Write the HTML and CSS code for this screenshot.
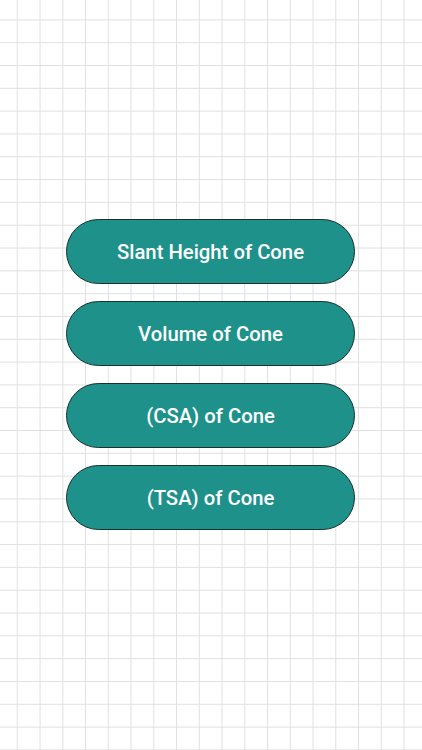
FILE: index.html
```html
<!DOCTYPE html>
<html>
<head>
<meta charset="utf-8">
<link rel="stylesheet" href="styles.css">
</head>
<body>
<main class="screen">
  <div class="menu">
    <button class="btn">Slant Height of Cone</button>
    <button class="btn">Volume of Cone</button>
    <button class="btn">(CSA) of Cone</button>
    <button class="btn">(TSA) of Cone</button>
  </div>
</main>
</body>
</html>
```
FILE: styles.css
```css
html, body {
  margin: 0;
  padding: 0;
}
body {
  width: 422px;
  height: 750px;
  overflow: hidden;
  font-family: Roboto, "Noto Sans", sans-serif;
}
.screen {
  width: 422px;
  height: 750px;
  display: flex;
  align-items: center;
  justify-content: center;
  background-color: #ffffff;
  background-image:
    linear-gradient(to right, #e0e0e0 0, #e0e0e0 1.2px, transparent 1.2px),
    linear-gradient(to bottom, #e0e0e0 0, #e0e0e0 1.2px, transparent 1.2px);
  background-size: 22.76px 22.82px;
  background-position: 16.8px 19.4px;
}
.menu {
  display: flex;
  flex-direction: column;
  gap: 17px;
  margin-top: -1px;
  margin-left: -1px;
}
.btn {
  width: 289px;
  height: 65px;
  box-sizing: border-box;
  border: 1px solid #17322f;
  border-radius: 33px;
  background: #1e918a;
  color: #ffffff;
  font-family: Roboto, "Noto Sans", sans-serif;
  font-weight: 500;
  font-size: 20.3px;
  padding: 0;
  cursor: pointer;
}
```
